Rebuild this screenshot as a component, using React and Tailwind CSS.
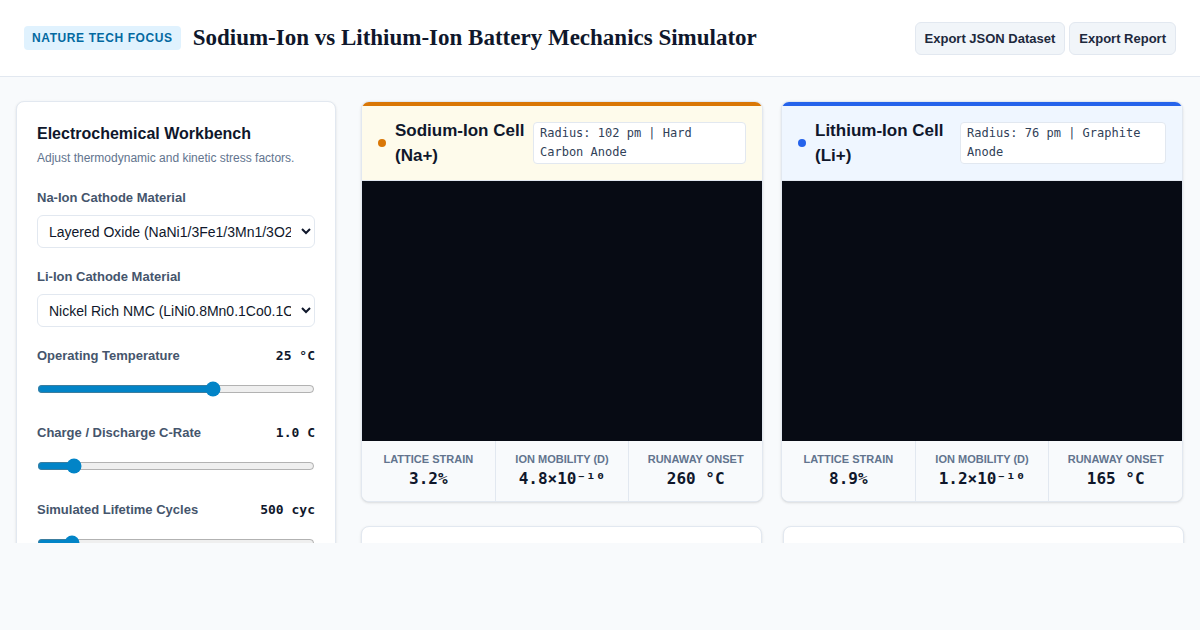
import React from "react";

const sans = "font-['Liberation_Sans','Arial',sans-serif]";
const mono = "font-['DejaVu_Sans_Mono',monospace]";

function Slider({ label, value, min, max, step, v, mt }) {
  return (
    <div className={mt}>
      <div className="flex items-center justify-between h-5">
        <span className="text-[13px] font-semibold text-slate-600">{label}</span>
        <span className={`${mono} text-[13px] font-bold text-slate-900`}>{value}</span>
      </div>
      <input
        type="range"
        min={min}
        max={max}
        step={step}
        defaultValue={v}
        className="block w-full mt-[15px] accent-[#0284c7] h-4 m-0"
      />
    </div>
  );
}

function Stat({ label, value, last }) {
  return (
    <div className={`flex-1 flex flex-col items-center py-[10px] ${last ? "" : "border-r border-slate-200"}`}>
      <span className="text-[11px] leading-4 font-semibold uppercase text-slate-500">{label}</span>
      <span className={`${mono} text-[16px] leading-6 font-bold text-slate-900`}>{value}</span>
    </div>
  );
}

function Cell({ top, headBg, dot, title1, title2, info, titleW, boxW, stats }) {
  return (
    <div className={`w-[402px] rounded-lg border border-slate-200 bg-white shadow-sm overflow-hidden`}>
      <div className={`h-1 ${top}`} />
      <div className={`flex items-center justify-between px-4 py-3 border-b border-slate-200 ${headBg}`}>
        <div className="flex items-center gap-[9px]">
          <span className={`w-2 h-2 rounded-full ${dot}`} />
          <div className={`text-[17px] leading-[25px] font-bold text-slate-900 ${titleW}`}>
            {title1}
            <br />
            {title2}
          </div>
        </div>
        <div className={`${boxW} ${mono} text-[12px] leading-[19px] text-slate-700 bg-white border border-slate-200 rounded px-[6px] py-[1px]`}>
          {info}
        </div>
      </div>
      <div className="h-[260px] bg-[#070b14]" />
      <div className="flex bg-[#f8fafc]">
        <Stat label="Lattice Strain" value={stats[0]} />
        <Stat label="Ion Mobility (D)" value={stats[1]} />
        <Stat label="Runaway Onset" value={stats[2]} last />
      </div>
    </div>
  );
}

export default function App() {
  return (
    <div className={`${sans} w-[1200px] h-[630px] bg-[#f8fafc]`}>
      <div className="h-[543px] overflow-hidden">
        <header className="h-[77px] bg-white border-b border-slate-200 flex items-center justify-between px-6">
          <div className="flex items-center gap-3">
            <span className="h-6 flex items-center px-2 rounded bg-[#e0f2fe] text-[#0369a1] text-[12px] font-bold uppercase tracking-[0.05em]">
              Nature Tech Focus
            </span>
            <h1 className="font-['Liberation_Serif','Times_New_Roman',serif] font-bold text-[23px] text-slate-900">
              Sodium-Ion vs Lithium-Ion Battery Mechanics Simulator
            </h1>
          </div>
          <div className="flex gap-1 mt-[1px]">
            <button className="h-[33px] px-[9px] rounded-md bg-slate-100 border border-slate-200 text-[13px] font-bold text-slate-800">
              Export JSON Dataset
            </button>
            <button className="h-[33px] px-[9px] rounded-md bg-slate-100 border border-slate-200 text-[13px] font-bold text-slate-800">
              Export Report
            </button>
          </div>
        </header>
        <main className="flex gap-[25px] pl-4 pt-6">
          <aside className="w-[320px] shrink-0 h-[600px] rounded-lg border border-slate-200 bg-white shadow-sm px-5 pt-5">
            <h2 className="text-[16px] leading-6 font-bold text-slate-900">Electrochemical Workbench</h2>
            <p className="mt-1 text-[12px] leading-4 text-slate-500">Adjust thermodynamic and kinetic stress factors.</p>
            <div className="mt-[22px]">
              <div className="text-[13px] leading-5 font-semibold text-slate-600">Na-Ion Cathode Material</div>
              <select className="mt-[7px] w-full h-[33px] rounded-md border border-slate-200 bg-white px-[7px] text-[14px] text-slate-900">
                <option>Layered Oxide (NaNi1/3Fe1/3Mn1/3O2)</option>
              </select>
            </div>
            <div className="mt-[19px]">
              <div className="text-[13px] leading-5 font-semibold text-slate-600">Li-Ion Cathode Material</div>
              <select className="mt-[7px] w-full h-[33px] rounded-md border border-slate-200 bg-white px-[7px] text-[14px] text-slate-900">
                <option>Nickel Rich NMC (LiNi0.8Mn0.1Co0.1O2)</option>
              </select>
            </div>
            <Slider mt="mt-[19px]" label="Operating Temperature" value="25 °C" min={-20} max={50} step={1} v={25} />
            <Slider mt="mt-[26px]" label="Charge / Discharge C-Rate" value="1.0 C" min={0.5} max={5} step={0.1} v={1} />
            <Slider mt="mt-[26px]" label="Simulated Lifetime Cycles" value="500 cyc" min={100} max={4000} step={50} v={500} />
          </aside>
          <div className="flex flex-col gap-[24px]">
            <div className="flex gap-[18px]">
              <Cell
                top="bg-[#d97706]"
                headBg="bg-[#fefbeb]"
                dot="bg-[#d97706]"
                title1="Sodium-Ion Cell"
                title2="(Na+)"
                info="Radius: 102 pm | Hard Carbon Anode"
                titleW="w-[130px]"
                boxW="w-[213px]"
                stats={["3.2%", "4.8×10⁻¹⁰", "260 °C"]}
              />
              <Cell
                top="bg-[#2563eb]"
                headBg="bg-[#eff6ff]"
                dot="bg-[#2563eb]"
                title1="Lithium-Ion Cell"
                title2="(Li+)"
                info="Radius: 76 pm | Graphite Anode"
                titleW="w-[136px]"
                boxW="w-[206px]"
                stats={["8.9%", "1.2×10⁻¹⁰", "165 °C"]}
              />
            </div>
            <div className="flex gap-[21px]">
              <div className="w-[401px] h-[200px] rounded-lg border border-slate-200 bg-white shadow-sm" />
              <div className="w-[401px] h-[200px] rounded-lg border border-slate-200 bg-white shadow-sm" />
            </div>
          </div>
        </main>
      </div>
    </div>
  );
}
